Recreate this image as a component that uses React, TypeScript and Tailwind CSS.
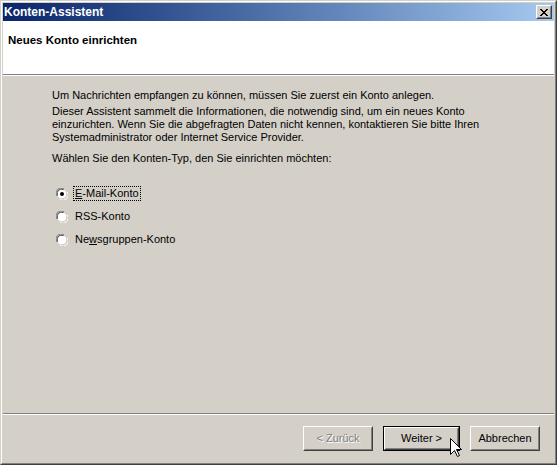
import React from "react";

const font = { fontFamily: '"Liberation Sans", Arial, sans-serif' };

function Radio({ checked }: { checked?: boolean }) {
  return (
    <span className="relative inline-block w-3 h-3 shrink-0">
      <svg width="12" height="12" viewBox="0 0 12 12" className="block">
        {/* classic sunken radio ring */}
        <path d="M0.5 8 A5.5 5.5 0 0 1 8 0.5" stroke="#808080" fill="none" />
        <path d="M4 11.5 A5.5 5.5 0 0 0 11.5 4" stroke="#ffffff" fill="none" />
        <circle cx="6" cy="6" r="4.5" fill="#ffffff" />
        <path d="M1.5 7.5 A4.5 4.5 0 0 1 7.5 1.5" stroke="#404040" fill="none" />
        <path d="M4.5 10.5 A4.5 4.5 0 0 0 10.5 4.5" stroke="#d4d0c8" fill="none" />
        {checked && <circle cx="6" cy="6" r="2" fill="#000000" />}
      </svg>
    </span>
  );
}

function Button({
  children,
  disabled,
  isDefault,
}: {
  children: React.ReactNode;
  disabled?: boolean;
  isDefault?: boolean;
}) {
  const inner = (
    <div className="h-full border border-t-white border-l-white border-r-[#404040] border-b-[#404040]">
      <div className="h-full border border-t-[#d4d0c8] border-l-[#d4d0c8] border-r-[#808080] border-b-[#808080] flex items-center justify-center">
        <span
          className={`text-[11px] leading-[13px] ${
            disabled ? "text-[#808080] [text-shadow:1px_1px_0_#ffffff]" : "text-black"
          }`}
        >
          {children}
        </span>
      </div>
    </div>
  );
  if (isDefault) {
    return <div className="w-[77px] h-[25px] border border-black">{inner}</div>;
  }
  return <div className="w-[70px] h-[25px]">{inner}</div>;
}

export default function App() {
  return (
    <div
      className="w-[557px] h-[465px] border border-t-[#d4d0c8] border-l-[#d4d0c8] border-r-[#404040] border-b-[#404040] relative select-none"
      style={font}
    >
      <div className="h-full border border-t-white border-l-white border-r-[#808080] border-b-[#808080] bg-[#d4d0c8] p-px flex flex-col">
        {/* Title bar */}
        <div className="h-[18px] shrink-0 bg-linear-to-r from-[#0a246a] to-[#a6caf0] flex items-center justify-between pl-px pr-[2px]">
          <span className="text-white font-bold text-[12px] leading-[14px]">
            Konten-Assistent
          </span>
          <div className="w-4 h-[14px] border border-t-white border-l-white border-r-[#404040] border-b-[#404040] bg-[#d4d0c8]">
            <div className="h-full border border-t-[#d4d0c8] border-l-[#d4d0c8] border-r-[#808080] border-b-[#808080] flex items-center justify-center">
              <svg width="8" height="7" viewBox="0 0 8 7" className="block">
                <path
                  d="M0 0h2v1h1v1h2v-1h1v-1h2v1h-1v1h-1v1h-1v1h1v1h1v1h1v1h-2v-1h-1v-1h-2v1h-1v1h-2v-1h1v-1h1v-1h1v-1h-1v-1h-1v-1h-1z"
                  fill="#000000"
                />
              </svg>
            </div>
          </div>
        </div>

        {/* Wizard page header */}
        <div className="h-[53px] shrink-0 bg-white pl-[5px] pt-[13px]">
          <p className="font-bold text-[11.5px] leading-[13px] text-black">
            Neues Konto einrichten
          </p>
        </div>
        <div className="h-[2px] shrink-0 border-t border-t-[#808080] border-b border-b-white" />

        {/* Page body */}
        <div className="flex-1 pl-[49px] pt-[13px] text-[11px] leading-[13px] text-black">
          <p>Um Nachrichten empfangen zu können, müssen Sie zuerst ein Konto anlegen.</p>
          <p className="mt-[3px]">
            Dieser Assistent sammelt die Informationen, die notwendig sind, um ein neues Konto
            <br />
            einzurichten. Wenn Sie die abgefragten Daten nicht kennen, kontaktieren Sie bitte Ihren
            <br />
            Systemadministrator oder Internet Service Provider.
          </p>
          <p className="mt-[8px]">Wählen Sie den Konten-Typ, den Sie einrichten möchten:</p>

          <div className="mt-[21px] pl-[4px] flex flex-col gap-[8px]">
            <label className="flex items-center gap-[5px]">
              <Radio checked />
              <span className="border border-dotted border-black px-px">
                <span className="underline">E</span>-Mail-Konto
              </span>
            </label>
            <label className="flex items-center gap-[5px]">
              <Radio />
              <span className="border border-transparent px-px">RSS-Konto</span>
            </label>
            <label className="flex items-center gap-[5px]">
              <Radio />
              <span className="border border-transparent px-px">
                Ne<span className="underline">w</span>sgruppen-Konto
              </span>
            </label>
          </div>
        </div>

        <div className="h-[2px] shrink-0 border-t border-t-[#808080] border-b border-b-white" />

        {/* Navigation buttons */}
        <div className="h-[47px] shrink-0 flex items-start justify-end pt-[11px] pr-[14px]">
          <Button disabled>&lt; Zurück</Button>
          <div className="ml-[10px]">
            <Button isDefault>Weiter &gt;</Button>
          </div>
          <div className="ml-[10px]">
            <Button>Abbrechen</Button>
          </div>
        </div>
      </div>

      {/* Mouse pointer */}
      <svg
        width="12"
        height="19"
        viewBox="0 0 12 19"
        className="absolute left-[449px] top-[437px] block"
      >
        <path
          d="M0.5 0.5 V16.5 L4.5 12.5 L7.5 18.5 L9.5 17.5 L6.5 11.5 H11.5 Z"
          fill="#ffffff"
          stroke="#000000"
          strokeLinejoin="miter"
        />
      </svg>
    </div>
  );
}
